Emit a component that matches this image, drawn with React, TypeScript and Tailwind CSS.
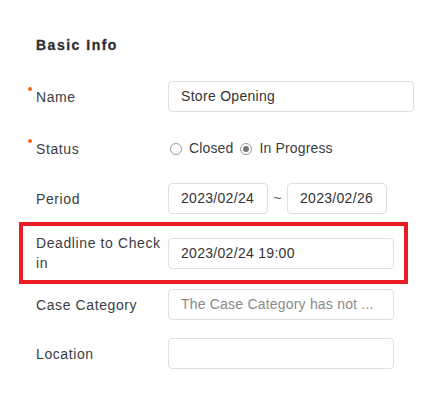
import React from "react";

function Label({ children, required }: { children: React.ReactNode; required?: boolean }) {
  return (
    <div className="relative w-[132px] shrink-0 text-[14px] leading-5 tracking-[0.6px] text-[#3a3d44]">
      {required && <span className="absolute left-[-8px] top-[0px] h-[4px] w-[4px] rounded-full bg-[#f5631a]" />}
      {children}
    </div>
  );
}

function Input({ value, placeholder, w }: { value?: string; placeholder?: string; w: string }) {
  return (
    <div className={`${w} flex h-[31px] items-center overflow-hidden rounded-[4px] border border-[#dedfe3] bg-white px-[12px] text-[14px] tracking-[0.3px]`}>
      {value ? (
        <span className="whitespace-nowrap text-[#333]">{value}</span>
      ) : placeholder ? (
        <span className="whitespace-nowrap text-[#8a8a8a] tracking-[0.2px]">{placeholder}</span>
      ) : null}
    </div>
  );
}

function Radio({ checked, label }: { checked?: boolean; label: string }) {
  return (
    <div className="flex items-center">
      <span className="flex h-[12px] w-[12px] items-center justify-center rounded-full border border-[#9a9a9a] bg-white">
        {checked && <span className="h-[6px] w-[6px] rounded-full bg-[#777]" />}
      </span>
      <span className="ml-[7px] text-[14px] tracking-[0.15px] text-[#3a3d44]">{label}</span>
    </div>
  );
}

export default function App() {
  return (
    <div className="h-[396px] w-[447px] bg-white pl-[19px] font-['Liberation_Sans',Arial,sans-serif]">
      <div className="pt-[35px] pl-[17px] text-[14px] font-bold leading-5 tracking-[1.5px] text-[#2e2e33] [-webkit-text-stroke:0.3px_#2e2e33]">Basic Info</div>

      <div className="mt-[26px] flex h-[31px] items-center pl-[17px]">
        <Label required>Name</Label>
        <Input value="Store Opening" w="w-[246px]" />
      </div>

      <div className="mt-[21px] flex h-[31px] items-center pl-[17px]">
        <Label required>Status</Label>
        <div className="ml-[2px] flex items-center gap-[7px]">
          <Radio label="Closed" />
          <Radio checked label="In Progress" />
        </div>
      </div>

      <div className="mt-[19px] flex h-[31px] items-center pl-[17px]">
        <Label>Period</Label>
        <Input value="2023/02/24" w="w-[100px]" />
        <span className="w-[19px] text-center text-[14px] text-[#555]">~</span>
        <Input value="2023/02/26" w="w-[100px]" />
      </div>

      <div className="mt-[8px] flex h-[62px] w-[389px] items-center border-4 border-[#ec1c24] pl-[13px]">
        <Label>Deadline to Check in</Label>
        <Input value="2023/02/24 19:00" w="w-[226px]" />
      </div>

      <div className="mt-[5px] flex h-[31px] items-center pl-[17px]">
        <Label>Case Category</Label>
        <Input placeholder="The Case Category has not ..." w="w-[226px]" />
      </div>

      <div className="mt-[18px] flex h-[31px] items-center pl-[17px]">
        <Label>Location</Label>
        <Input w="w-[226px]" />
      </div>
    </div>
  );
}
